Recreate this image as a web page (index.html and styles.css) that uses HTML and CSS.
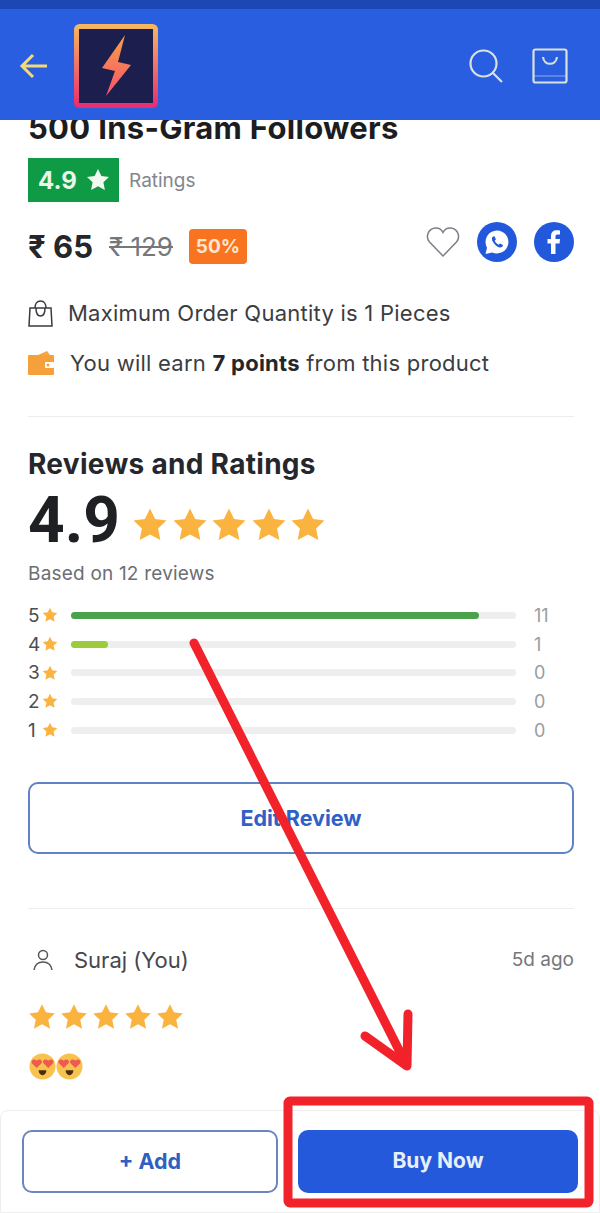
FILE: index.html
```html
<!DOCTYPE html>
<html lang="en">
<head>
  <meta charset="UTF-8" />
  <meta name="viewport" content="width=device-width, initial-scale=1.0" />
  <title>500 Ins-Gram Followers</title>
  <link rel="stylesheet" href="styles.css">
</head>
<body>

  <svg class="defs" width="0" height="0">
    <symbol id="star" viewBox="0 0 24 24">
      <path d="M12 1l3.400 7 7.600 1-5.600 5.300 1.500 7.700-6.900-3.700L5.100 22l1.500-7.700L1 9l7.600-1z" stroke-linejoin="round" />
    </symbol>
    <symbol id="heartEyes" viewBox="0 0 28 28">
      <circle cx="14" cy="14" r="13.500" fill="#f7c34e" />
      <path d="M8 15.500l-5-5c-1.800-3 2.500-5.500 5-2.500 2.500-3 6.800-.5 5 2.500z" fill="#ee5a52" />
      <path d="M20 15.500l-5-5c-1.800-3 2.500-5.500 5-2.500 2.500-3 6.800-.5 5 2.500z" fill="#ee5a52" />
      <path d="M10 18h8c0 3-1.800 5-4 5s-4-2-4-5z" fill="#4a2a12" />
    </symbol>
    <linearGradient id="logoEdge" x1="0" y1="0" x2="0" y2="1">
      <stop offset="0" stop-color="#f4b660" />
      <stop offset="1" stop-color="#e92f6f" />
    </linearGradient>
    <linearGradient id="logoBolt" x1="0" y1="0" x2="0" y2="1">
      <stop offset="0" stop-color="#f9a04a" />
      <stop offset="1" stop-color="#f4536a" />
    </linearGradient>
  </svg>

  <header class="topbar">
    <svg class="back" width="30" height="30" viewBox="0 0 30 30">
      <path d="M28 15H3M14 4L3 15l11 11" />
    </svg>
    <svg class="logo" width="84" height="84" viewBox="0 0 84 84">
      <rect x="2.500" y="2.500" width="79" height="79" rx="3" fill="#1c1f4d" stroke="url(#logoEdge)" stroke-width="5" />
      <path d="M51 11L28 44l13 3-9 25 25-31-13-3z" fill="url(#logoBolt)" />
    </svg>
    <div class="topbar-icons">
      <svg width="34" height="34" viewBox="0 0 34 34">
        <circle cx="14.500" cy="14.500" r="13" />
        <path d="M24 24l9 9" />
      </svg>
      <svg width="36" height="36" viewBox="0 0 36 36">
        <rect x="1.500" y="1.500" width="33" height="33" rx="2" />
        <path d="M11 9c1 9 13 9 14 0" />
        <path class="faint" d="M2 28h32" />
      </svg>
    </div>
  </header>

  <main class="content">
    <h1 class="title">500 Ins-Gram Followers</h1>

    <div class="rating-row">
      <div class="rating-badge">4.9 <svg width="24" height="24"><use href="#star" /></svg></div>
      <span class="rating-label">Ratings</span>
    </div>

    <div class="price-row">
      <span class="price">₹ 65</span>
      <span class="old-price">₹ 129</span>
      <span class="discount">50%</span>
      <div class="share">
        <svg class="heart" width="34" height="32" viewBox="0 0 34 32">
          <path d="M17 30L3.500 16C-.5 11.500 1.500 3 9 2c4-.5 6.500 1.500 8 4.500C18.500 3.500 21 1.500 25 2c7.500 1 9.500 9.500 5.500 14z" />
        </svg>
        <svg width="40" height="40" viewBox="0 0 40 40">
          <circle cx="20" cy="20" r="20" fill="#2259dc" />
          <path d="M20 8.500a11.500 11.500 0 0 0-10 17.200L8.500 32l6.500-1.600A11.500 11.500 0 1 0 20 8.500z" fill="#fff" />
          <path d="M16 14.500c-1.500 1-1.500 3 0 5.500s4 5 6.500 5.500c2 .4 3.500-1 3.500-2.500l-3-1.500-1.300 1.300c-1.700-.7-3.300-2.400-4-4l1.200-1.300-1.200-3z" fill="#2259dc" />
        </svg>
        <svg width="40" height="40" viewBox="0 0 40 40">
          <circle cx="20" cy="20" r="20" fill="#2259dc" />
          <path d="M21.500 32V21.500h4l.5-4.500h-4.500v-2.500c0-1.300.5-2 2-2H26V8.500c-.7-.1-2-.2-3.300-.2-3.400 0-5.700 2-5.700 5.700V17h-3.500v4.500H17V32z" fill="#fff" />
        </svg>
      </div>
    </div>

    <ul class="notes">
      <li>
        <svg width="25" height="28" viewBox="0 0 25 28">
          <path d="M2 9h21l1 18H1zM7 9c0-4 2-7 5.500-7S18 5 18 9M8 9c0 5 1 8 4.500 8S17 14 17 9" />
        </svg>
        <span>Maximum Order Quantity is 1 Pieces</span>
      </li>
      <li class="note-earn">
        <svg width="27" height="26" viewBox="0 0 27 26">
          <path d="M10 5l9-4 3 4z" fill="#f5a742" />
          <rect y="5" width="26" height="20" rx="1" fill="#f5a03a" />
          <rect x="17" y="12" width="9" height="6" rx="1" fill="#fff" />
          <circle cx="20" cy="15" r="1.500" fill="#f5a03a" />
        </svg>
        <span>You will earn <b>7 points</b> from this product</span>
      </li>
    </ul>

    <hr class="rule rule-first">

    <h2 class="section-title">Reviews and Ratings</h2>
    <div class="score-row">
      <span class="score">4.9</span>
      <div class="stars stars-big">
        <svg><use href="#star" /></svg>
        <svg><use href="#star" /></svg>
        <svg><use href="#star" /></svg>
        <svg><use href="#star" /></svg>
        <svg><use href="#star" /></svg>
      </div>
    </div>
    <p class="based">Based on 12 reviews</p>

    <div class="bars">
      <div class="bar-row">
        <span class="bar-num">5</span><svg width="16" height="16"><use href="#star" /></svg>
        <div class="bar"><div class="bar-fill" style="width: 91.600%"></div></div>
        <span class="bar-count">11</span>
      </div>
      <div class="bar-row">
        <span class="bar-num">4</span><svg width="16" height="16"><use href="#star" /></svg>
        <div class="bar"><div class="bar-fill lime" style="width: 8.300%"></div></div>
        <span class="bar-count">1</span>
      </div>
      <div class="bar-row">
        <span class="bar-num">3</span><svg width="16" height="16"><use href="#star" /></svg>
        <div class="bar"></div>
        <span class="bar-count">0</span>
      </div>
      <div class="bar-row">
        <span class="bar-num">2</span><svg width="16" height="16"><use href="#star" /></svg>
        <div class="bar"></div>
        <span class="bar-count">0</span>
      </div>
      <div class="bar-row">
        <span class="bar-num">1</span><svg width="16" height="16"><use href="#star" /></svg>
        <div class="bar"></div>
        <span class="bar-count">0</span>
      </div>
    </div>

    <button class="btn btn-edit">Edit Review</button>

    <hr class="rule rule-second">

    <div class="review-head">
      <svg class="avatar" width="26" height="26" viewBox="0 0 26 26">
        <circle cx="13" cy="8" r="4.500" />
        <path d="M4 23c1-6 4-8 9-8s8 2 9 8" />
      </svg>
      <span class="review-name">Suraj (You)</span>
      <span class="review-date">5d ago</span>
    </div>
    <div class="stars stars-small">
      <svg><use href="#star" /></svg>
      <svg><use href="#star" /></svg>
      <svg><use href="#star" /></svg>
      <svg><use href="#star" /></svg>
      <svg><use href="#star" /></svg>
    </div>
    <div class="emoji-row">
      <svg width="27" height="27"><use href="#heartEyes" /></svg>
      <svg width="27" height="27"><use href="#heartEyes" /></svg>
    </div>
  </main>

  <footer class="actions">
    <button class="btn btn-add">+ Add</button>
    <button class="btn btn-buy">Buy Now</button>
  </footer>

  <!-- red marks drawn over the screenshot -->
  <svg class="markup" width="600" height="1213" viewBox="0 0 600 1213">
    <path d="M194 643L404 1060M408 1014L407 1066L365 1036" />
    <rect x="288" y="1101" width="301" height="102" rx="2" />
  </svg>

</body>
</html>
```

FILE: styles.css
```css
* {
  box-sizing: border-box;
}
body {
  position: relative;
  display: flex;
  flex-direction: column;
  width: 600px;
  height: 1213px;
  margin: 0;
  overflow: hidden;
  background: #fff;
  color: #24262b;
  font-family: Inter, "Liberation Sans", sans-serif;
}
.defs {
  position: absolute;
}
.topbar {
  position: relative;
  z-index: 2;
  display: flex;
  flex: none;
  align-items: center;
  height: 120px;
  padding: 2px 32px 0 19px;
  background: #2a5ee0;
  border-top: 9px solid #1c48b6;
}
.back {
  fill: none;
  stroke: #f4da77;
  stroke-width: 3;
}
.logo {
  margin-left: 25px;
}
.topbar-icons {
  display: flex;
  gap: 29px;
  align-items: center;
  margin-left: auto;
}
.topbar-icons svg {
  fill: none;
  stroke: #d9e2da;
  stroke-width: 2.200;
}
.topbar-icons .faint {
  stroke-width: 1;
  opacity: .6;
}
.content {
  flex: 1;
  min-height: 0;
  padding: 0 26px 0 28px;
  overflow: hidden;
}
.title {
  height: 32px;
  margin: -8px 0 0;
  font-size: 31px;
  line-height: 32px;
  font-weight: 700;
  letter-spacing: .3px;
  color: #1c1d21;
  white-space: nowrap;
}
.rating-row {
  display: flex;
  align-items: center;
  margin-top: 14px;
}
.rating-badge {
  display: flex;
  align-items: center;
  gap: 9px;
  width: 91px;
  height: 44px;
  padding-left: 10px;
  background: #0f9b45;
  color: #e9f7ea;
  font-size: 24px;
  font-weight: 700;
}
.rating-badge svg {
  fill: #f2faf0;
}
.rating-label {
  margin-left: 10px;
  color: #83868c;
  font-size: 19px;
}
.price-row {
  display: flex;
  align-items: center;
  height: 40px;
  margin-top: 20px;
}
.price {
  margin-top: 8px;
  font-size: 31px;
  font-weight: 700;
}
.old-price {
  margin: 8px 0 0 16px;
  color: #74777c;
  font-size: 26px;
  text-decoration: line-through;
}
.discount {
  display: flex;
  align-items: center;
  justify-content: center;
  width: 58px;
  height: 35px;
  margin: 8px 0 0 16px;
  border-radius: 4px;
  background: #f97420;
  color: #fde6d0;
  font-size: 19px;
  font-weight: 700;
}
.share {
  display: flex;
  align-items: center;
  gap: 17px;
  margin-left: auto;
}
.heart {
  fill: none;
  stroke: #7c7f86;
  stroke-width: 1.500;
}
.notes {
  display: flex;
  flex-direction: column;
  gap: 16px;
  margin: 34px 0 0;
  padding: 0;
  list-style: none;
  font-size: 22px;
  letter-spacing: .25px;
  color: #3b3d42;
}
.notes li {
  display: flex;
  align-items: center;
  height: 34px;
  gap: 15px;
}
.notes li svg {
  flex: none;
  fill: none;
  stroke: #3a3b3f;
  stroke-width: 1.500;
}
.notes .note-earn svg {
  stroke: none;
}
.notes b {
  color: #24262b;
}
.rule {
  height: 1px;
  margin: 0;
  border: 0;
  background: #eceded;
}
.rule-first {
  margin-top: 36px;
}
.rule-second {
  margin-top: 54px;
}
.section-title {
  height: 32px;
  margin: 31px 0 0;
  font-size: 28px;
  line-height: 32px;
  font-weight: 700;
  letter-spacing: .3px;
  color: #25272c;
}
.score-row {
  display: flex;
  align-items: center;
  gap: 12px;
  height: 64px;
  margin-top: 9px;
}
.score {
  font-family: Roboto, "Liberation Sans", sans-serif;
  font-size: 64px;
  line-height: 64px;
  font-weight: 700;
  color: #1f2024;
}
.stars {
  display: flex;
  fill: #fbb340;
}
.stars-big {
  gap: 3.500px;
  margin-top: 8px;
}
.stars-big svg {
  width: 36px;
  height: 36px;
}
.stars-small {
  gap: 4px;
  margin-top: 26px;
}
.stars-small svg {
  width: 28px;
  height: 28px;
}
.based {
  height: 22px;
  margin: 10px 0 0;
  color: #6b6e73;
  font-size: 19px;
  line-height: 22px;
  letter-spacing: .2px;
}
.bars {
  display: grid;
  grid-auto-rows: 28.700px;
  margin-top: 16px;
  fill: #fbb340;
}
.bar-row {
  display: flex;
  align-items: center;
  color: #4c4e52;
  font-size: 19px;
}
.bar-num {
  width: 14px;
}
.bar {
  width: 445px;
  height: 7px;
  margin-left: 13px;
  border-radius: 4px;
  background: #eeeeef;
}
.bar-fill {
  height: 100%;
  border-radius: 4px;
  background: #4aa24d;
}
.bar-fill.lime {
  background: #9ccc3c;
}
.bar-count {
  margin-left: 18px;
  color: #9a9c9f;
  font-size: 18px;
}
.btn {
  display: block;
  padding-bottom: 3px;
  border-radius: 10px;
  font-family: Inter, "Liberation Sans", sans-serif;
  font-size: 21.500px;
  font-weight: 700;
}
.btn-edit {
  width: 546px;
  height: 72px;
  margin-top: 37.500px;
  padding-bottom: 0;
  border: 2px solid #5e82c4;
  background: #fff;
  color: #2f60c8;
}
.review-head {
  display: flex;
  align-items: center;
  height: 34px;
  margin-top: 34px;
  padding-left: 2px;
}
.avatar {
  fill: none;
  stroke: #55575c;
  stroke-width: 1.500;
}
.review-name {
  margin-left: 18px;
  color: #45474c;
  font-size: 22px;
}
.review-date {
  margin-left: auto;
  color: #75777c;
  font-size: 19px;
}
.emoji-row {
  display: flex;
  margin-top: 22px;
  padding-left: 1px;
}
.actions {
  display: flex;
  flex: none;
  gap: 20px;
  height: 103px;
  padding: 19px 21px 20px 21px;
  border: 1px solid #eeeeee;
  border-radius: 8px 8px 0 0;
}
.btn-add {
  width: 256px;
  height: 63px;
  border: 2px solid #6b85bd;
  background: #fff;
  color: #2f5fc0;
}
.btn-buy {
  width: 280px;
  height: 63px;
  border: 0;
  background: #2559dc;
  color: #e6effa;
  font-size: 21px;
}
.markup {
  position: absolute;
  top: 0;
  left: 0;
  z-index: 3;
  fill: none;
  stroke: #f2222b;
  stroke-width: 9;
  stroke-linecap: round;
  stroke-linejoin: round;
}
```
